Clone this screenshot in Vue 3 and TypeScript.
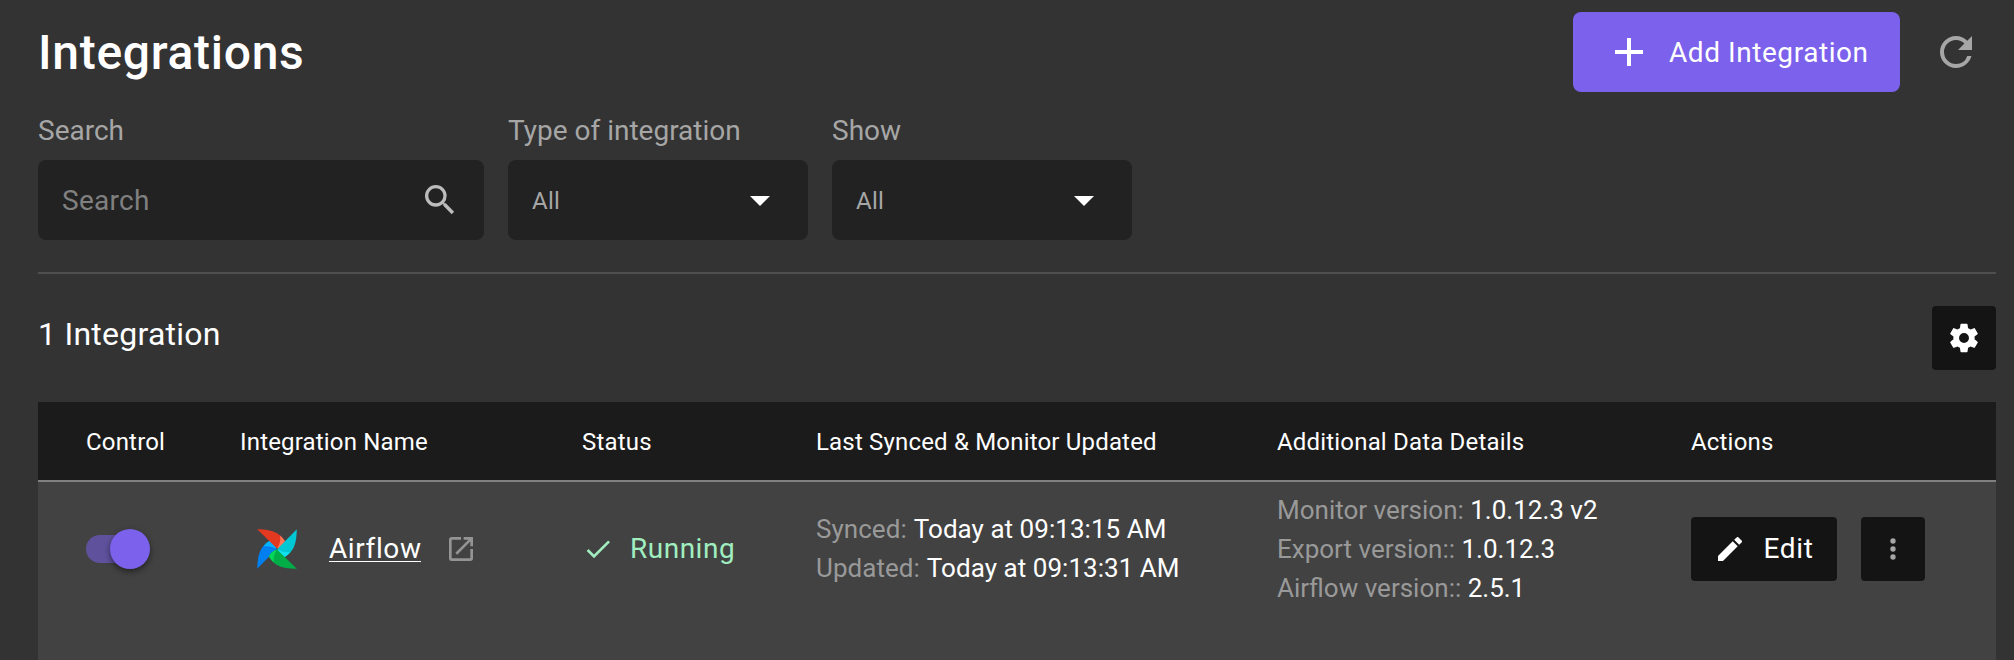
<script setup lang="ts">
import { ref } from 'vue'

interface Detail {
  label: string
  value: string
}

const columns: string[] = [
  'Control',
  'Integration Name',
  'Status',
  'Last Synced & Monitor Updated',
  'Additional Data Details',
  'Actions',
]

const syncTimes: Detail[] = [
  { label: 'Synced:', value: 'Today at 09:13:15 AM' },
  { label: 'Updated:', value: 'Today at 09:13:31 AM' },
]

const versions: Detail[] = [
  { label: 'Monitor version:', value: '1.0.12.3 v2' },
  { label: 'Export version::', value: '1.0.12.3' },
  { label: 'Airflow version::', value: '2.5.1' },
]

const filters: Detail[] = [
  { label: 'Type of integration', value: 'All' },
  { label: 'Show', value: 'All' },
]

const search = ref('')
const enabled = ref(true)
</script>

<template>
  <main class="page">
    <header class="header">
      <h1 class="title">Integrations</h1>
      <div class="header-actions">
        <button class="add" type="button">
          <svg class="icon-48" viewBox="0 0 24 24"><path d="M19 13h-6v6h-2v-6H5v-2h6V5h2v6h6v2z" /></svg>
          <span>Add Integration</span>
        </button>
        <button class="refresh" type="button" aria-label="Refresh">
          <svg class="icon-48" viewBox="0 0 24 24"><path d="M17.65 6.35A7.96 7.96 0 0 0 12 4a8 8 0 0 0-8 8 8 8 0 0 0 8 8c3.73 0 6.84-2.55 7.73-6h-2.08A5.99 5.99 0 0 1 12 18a6 6 0 0 1-6-6 6 6 0 0 1 6-6c1.66 0 3.14.69 4.22 1.78L13 11h7V4l-2.35 2.35z" /></svg>
        </button>
      </div>
    </header>

    <section class="filters">
      <div class="field">
        <label class="label" for="search">Search</label>
        <div class="box search-box">
          <input id="search" v-model="search" class="input" placeholder="Search" />
          <svg class="icon-40" viewBox="0 0 24 24"><path d="M15.5 14h-.79l-.28-.27A6.47 6.47 0 0 0 16 9.5 6.5 6.5 0 1 0 9.5 16c1.61 0 3.09-.59 4.23-1.57l.27.28v.79l5 4.99L20.49 19l-4.99-5zm-6 0C7.01 14 5 11.99 5 9.5S7.01 5 9.5 5 14 7.01 14 9.5 11.99 14 9.5 14z" /></svg>
        </div>
      </div>
      <div v-for="filter in filters" :key="filter.label" class="field">
        <span class="label">{{ filter.label }}</span>
        <div class="box select-box">
          <span class="select-value">{{ filter.value }}</span>
          <svg class="icon-48 caret" viewBox="0 0 24 24"><path d="M7 10l5 5 5-5z" /></svg>
        </div>
      </div>
    </section>

    <section class="summary">
      <h2 class="count">1 Integration</h2>
      <button class="square" type="button" aria-label="Table settings">
        <svg class="gear" viewBox="0 0 24 24"><path d="M12 15.5A3.5 3.5 0 0 1 8.500 12 3.500 3.500 0 0 1 12 8.500a3.500 3.500 0 0 1 3.500 3.500 3.500 3.500 0 0 1-3.500 3.500m7.430-2.530c.040-.320.070-.640.070-.970s-.030-.660-.070-1l2.110-1.630c.190-.150.240-.420.120-.640l-2-3.460c-.120-.220-.390-.310-.610-.220l-2.490 1c-.520-.390-1.060-.730-1.690-.980l-.370-2.650A.506.506 0 0 0 14 2h-4c-.250 0-.460.180-.500.420l-.370 2.650c-.630.250-1.170.590-1.690.980l-2.490-1c-.220-.090-.490 0-.610.220l-2 3.460c-.130.220-.070.490.120.640L4.570 11c-.040.340-.070.670-.070 1s.030.650.070.970l-2.110 1.660c-.190.150-.250.420-.120.640l2 3.460c.120.220.390.300.610.220l2.490-1.010c.520.400 1.060.740 1.690.990l.370 2.650c.040.240.250.420.500.420h4c.250 0 .460-.180.500-.420l.370-2.650c.630-.260 1.170-.590 1.690-.990l2.490 1.010c.220.080.490 0 .610-.220l2-3.460c.120-.220.070-.490-.120-.640z" /></svg>
      </button>
    </section>

    <section class="table">
      <div class="row head">
        <div v-for="column in columns" :key="column">{{ column }}</div>
      </div>
      <div class="row body">
        <div>
          <button class="toggle" :class="{ on: enabled }" type="button" role="switch" :aria-checked="enabled" @click="enabled = !enabled">
            <span class="knob"></span>
          </button>
        </div>
        <div class="name">
          <svg class="pinwheel" viewBox="0 0 40 40">
            <path fill="#0080f0" d="M.2 39.800 19.600 20C18 15.800 16 13.600 12.500 12 5 16.500.4 23 .2 39.800z" />
            <path fill="#00b4ff" d="M12.500 12c-3 1.400-4.700 3.300-6 5.500 5-.7 9 .2 13.100 2.500-1.500-4-3.700-6.500-7.100-8z" />
            <path fill="#e43921" d="M.2.2 20 19.600c4-1.500 6.500-3.400 8-7C23.500 5 17.500.4.200.2z" />
            <path fill="#ff7557" d="M28 12.600c-1.300-2.400-2.600-4-5-6 .8 4.500 0 8.800-3 13 4-1.500 6.500-3.400 8-7z" />
            <path fill="#00c7d4" d="M39.800.2 20.400 20c1.500 4 3.400 6.500 7 8 7.600-4.500 12.200-10.500 12.400-27.800z" />
            <path fill="#11e1ee" d="M27.400 28c2.400-1.300 4-2.600 6-5-4.500.8-8.800 0-13-3 1.500 4 3.400 6.500 7 8z" />
            <path fill="#00ad46" d="M39.800 39.800 20 20.400c-4 1.500-6.500 3.400-8 7 4.500 7.600 10.500 12.200 27.800 12.400z" />
            <path fill="#04d659" d="M12 27.400c1.300 2.400 2.600 4 5 6-.8-4.500 0-8.800 3-13-4 1.500-6.500 3.400-8 7z" />
          </svg>
          <a class="link">Airflow</a>
          <svg class="icon-32 external" viewBox="0 0 24 24"><path d="M14 3v2h3.590l-9.830 9.830 1.410 1.410L19 6.410V10h2V3M19 19H5V5h7V3H5a2 2 0 0 0-2 2v14a2 2 0 0 0 2 2h14a2 2 0 0 0 2-2v-7h-2v7z" /></svg>
        </div>
        <div class="status">
          <svg class="icon-32" viewBox="0 0 24 24"><path d="M21 7 9 19l-5.500-5.500 1.410-1.410L9 16.170 19.590 5.590 21 7z" /></svg>
          <span class="raised">Running</span>
        </div>
        <div class="details sync">
          <div v-for="item in syncTimes" :key="item.label"><span class="muted">{{ item.label }}</span> {{ item.value }}</div>
        </div>
        <div class="details">
          <div v-for="item in versions" :key="item.label"><span class="muted">{{ item.label }}</span> {{ item.value }}</div>
        </div>
        <div class="actions">
          <button class="edit" type="button">
            <svg class="icon-32" viewBox="0 0 24 24"><path d="M20.710 7.040c.390-.390.390-1.040 0-1.410l-2.340-2.340c-.370-.390-1.020-.390-1.410 0l-1.840 1.830 3.750 3.750M3 17.250V21h3.750L17.810 9.930l-3.750-3.750L3 17.250z" /></svg>
            <span class="raised">Edit</span>
          </button>
          <button class="square" type="button" aria-label="More">
            <svg class="icon-32 dots" viewBox="0 0 24 24"><circle cx="12" cy="6" r="2" /><circle cx="12" cy="12" r="2" /><circle cx="12" cy="18" r="2" /></svg>
          </button>
        </div>
      </div>
    </section>
  </main>
</template>

<style>
body {
  background: #333;
}
</style>

<style scoped>
.page {
  box-sizing: border-box;
  display: flex;
  flex-direction: column;
  height: 660px;
  padding: 12px 18px 0 38px;
  overflow: hidden;
  background: #333;
  color: #fff;
  font-family: Roboto, "Liberation Sans", sans-serif;
}

button {
  padding: 0;
  border: 0;
  color: inherit;
  font: inherit;
}

svg {
  display: block;
  flex: none;
  fill: currentColor;
}

.icon-48 { width: 48px; height: 48px; }
.icon-40 { width: 40px; height: 40px; }
.icon-32 { width: 32px; height: 32px; }

.header {
  display: flex;
  align-items: center;
  justify-content: space-between;
  height: 80px;
}

.title {
  margin: 0;
  font-size: 48px;
  font-weight: 500;
  letter-spacing: 0.7px;
}

.header-actions {
  display: flex;
  align-items: center;
  gap: 32px;
  padding-right: 16px;
}

.add {
  box-sizing: border-box;
  display: flex;
  align-items: center;
  gap: 16.5px;
  width: 327px;
  height: 80px;
  padding-left: 31.5px;
  border-radius: 8px;
  background: #7b61eb;
  font-size: 28px;
  letter-spacing: 0.56px;
  white-space: nowrap;
}

.refresh {
  background: none;
  color: #a6a6a6;
}

.filters {
  display: flex;
  gap: 24px;
  height: 154px;
  padding-top: 18px;
  padding-bottom: 8px;
  box-sizing: content-box;
  border-bottom: 2px solid #4f4f4f;
}

.label {
  display: block;
  height: 50px;
  color: #a6a6a6;
  font-size: 28px;
  line-height: 42px;
}

.box {
  box-sizing: border-box;
  display: flex;
  align-items: center;
  justify-content: space-between;
  height: 80px;
  padding: 0 24px;
  border-radius: 8px;
  background: #222;
  color: #bcbcbc;
}

.search-box { width: 446px; }

.select-box {
  width: 300px;
  color: #a6a6a6;
  font-size: 24px;
  letter-spacing: 0.3px;
}

.select-value { padding-top: 2px; }

.input {
  flex: 1;
  min-width: 0;
  padding: 0;
  border: 0;
  outline: 0;
  background: none;
  color: #fff;
  font: inherit;
  font-size: 28px;
  letter-spacing: 0.28px;
}

.input::placeholder { color: #808080; }

.caret { color: #fff; }

.summary {
  display: flex;
  justify-content: space-between;
  height: 64px;
  margin: 32px 0;
}

.count {
  margin: 0;
  font-size: 32px;
  font-weight: 400;
  line-height: 56px;
  letter-spacing: 0.25px;
}

.square,
.edit {
  display: flex;
  align-items: center;
  justify-content: center;
  width: 64px;
  height: 64px;
  border-radius: 4px;
  background: #141414;
}

.gear { width: 34px; height: 34px; }

.table {
  flex: 1;
  display: flex;
  flex-direction: column;
}

.row {
  display: grid;
  grid-template-columns: 154px 342px 234px 461px 414px 1fr;
  align-items: center;
  padding-left: 48px;
}

.head {
  box-sizing: border-box;
  height: 80px;
  padding-top: 2px;
  border-bottom: 2px solid #808080;
  background: #1b1b1b;
  font-size: 24px;
  letter-spacing: 0.18px;
}

.body {
  flex: 1;
  grid-template-rows: 134px;
  align-content: start;
  background: #424242;
}

.toggle {
  display: flex;
  align-items: center;
  width: 56px;
  height: 28px;
  border-radius: 14px;
  background: #777;
}

.toggle.on { background: #5f519c; }

.knob {
  flex: none;
  width: 40px;
  height: 40px;
  border-radius: 50%;
  background: #ddd;
  box-shadow: 0 2px 6px rgba(0, 0, 0, 0.35), 0 4px 4px rgba(0, 0, 0, 0.15);
}

.toggle.on .knob {
  margin-left: 24px;
  background: #7b61eb;
}

.name {
  display: flex;
  align-items: center;
  padding-left: 17px;
}

.pinwheel { width: 40px; height: 40px; }

.link {
  width: 92px;
  margin: 0 24px 0 32px;
  border-bottom: 1px solid #fff;
  font-size: 28px;
  line-height: 24px;
  letter-spacing: 0.6px;
}

.external { color: #949494; }

.status {
  display: flex;
  align-items: center;
  gap: 16px;
  color: #a0eec0;
  font-size: 28px;
  letter-spacing: 0.5px;
}

.raised { padding-bottom: 2px; }

.details {
  font-size: 26px;
  line-height: 39px;
  white-space: nowrap;
}

.sync { letter-spacing: 0.04px; }

.sync .muted { margin-right: 1px; }

.muted { color: #999; }

.actions {
  display: flex;
  gap: 24px;
}

.edit {
  gap: 17px;
  width: 146px;
  font-size: 28px;
  letter-spacing: 0.7px;
}

.dots { color: #a6a6a6; }
</style>
